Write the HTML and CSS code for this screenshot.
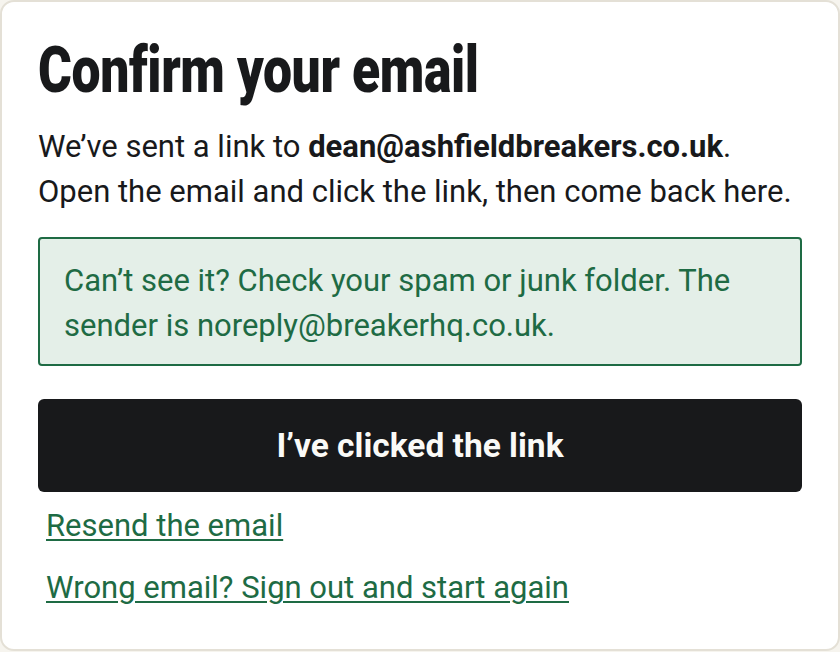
FILE: index.html
```html
<!DOCTYPE html>
<html lang="en">
<head>
<meta charset="utf-8">
<title>Confirm your email</title>
<link rel="stylesheet" href="styles.css">
</head>
<body>
<main class="card">
  <h1 class="title">Confirm your email</h1>
  <p class="lead">We’ve sent a link to <strong>dean@ashfieldbreakers.co.uk</strong>.<br>Open the email and click the link, then come back here.</p>
  <div class="notice">Can’t see it? Check your spam or junk folder. The<br>sender is noreply@breakerhq.co.uk.</div>
  <button class="primary" type="button">I’ve clicked the link</button>
  <div class="links">
    <a class="link" href="#">Resend the email</a>
    <a class="link" href="#">Wrong email? Sign out and start again</a>
  </div>
</main>
</body>
</html>
```

FILE: styles.css
```css
html, body {
  margin: 0;
  padding: 0;
}
body {
  background: #f6f4ee;
  font-family: "Roboto", "Liberation Sans", sans-serif;
  color: #18191b;
}
.card {
  box-sizing: border-box;
  width: 840px;
  height: 651px;
  background: #ffffff;
  border: 2px solid #e4e0d6;
  border-radius: 14px;
  padding: 33px 36px 0;
  display: flex;
  flex-direction: column;
}
.title {
  margin: 0;
  font-family: "Roboto", "Liberation Sans", sans-serif;
  font-weight: 900;
  font-size: 64px;
  line-height: 72px;
  letter-spacing: -0.5px;
  white-space: nowrap;
  transform: scaleX(0.808);
  transform-origin: left center;
}
.lead {
  margin: 17px 0 0;
  font-size: 31px;
  line-height: 45px;
}
.lead strong {
  font-weight: 700;
}
.notice {
  margin-top: 23px;
  border: 2px solid #1e6b44;
  border-radius: 4px;
  background: #e4efe8;
  color: #1e6b44;
  padding: 19px 24px 16px;
  font-size: 31px;
  line-height: 45px;
}
.primary {
  margin-top: 33px;
  height: 93px;
  border: 0;
  border-radius: 6px;
  background: #18191b;
  color: #fafaf7;
  font-family: "Roboto", "Liberation Sans", sans-serif;
  font-weight: 700;
  font-size: 33.5px;
  cursor: pointer;
}
.links {
  display: flex;
  flex-direction: column;
  align-items: flex-start;
  gap: 17px;
  padding: 11px 8px 0;
}
.link {
  color: #1e6b44;
  font-size: 31px;
  line-height: 45px;
  text-decoration: underline;
  text-underline-offset: 3px;
  text-decoration-thickness: 2px;
}
```
